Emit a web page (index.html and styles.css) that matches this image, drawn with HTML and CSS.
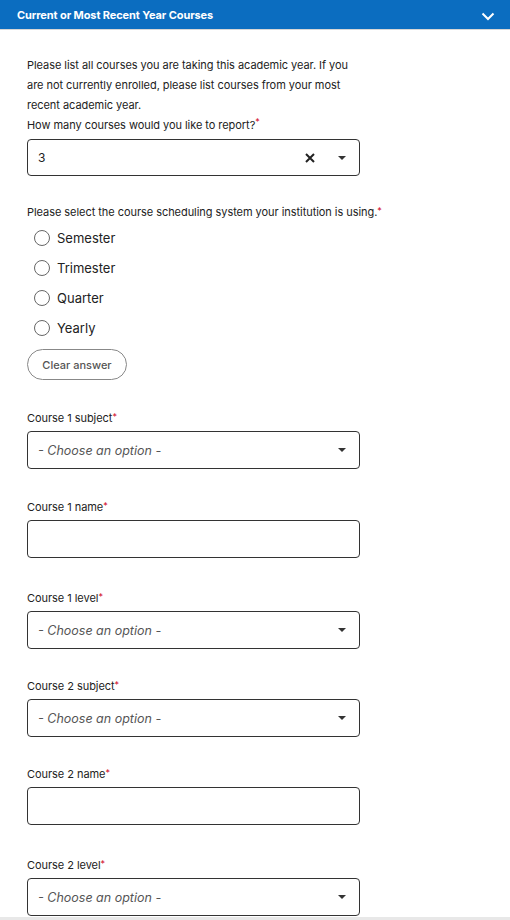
FILE: index.html
```html
<!DOCTYPE html>
<html>
<head>
<meta charset="utf-8">
<link rel="stylesheet" href="styles.css">
</head>
<body>
<div class="panel">
  <div class="header">
    <span class="title">Current or Most Recent Year Courses</span>
    <svg class="chev" width="14" height="10" viewBox="0 0 14 10"><path d="M1.5 2.5 L7 8 L12.5 2.5" fill="none" stroke="#fff" stroke-width="2"/></svg>
  </div>
  <div class="content">
    <p class="intro">Please list all courses you are taking this academic year. If you<br>are not currently enrolled, please list courses from your most<br>recent academic year.<br>How many courses would you like to report?<span class="req">*</span></p>
    <div class="box box-first">
      <span class="value">3</span>
      <svg class="clear" width="10" height="10" viewBox="0 0 10 10"><path d="M1 1 L9 9 M9 1 L1 9" stroke="#222" stroke-width="2"/></svg>
      <svg class="caret" width="8" height="4" viewBox="0 0 8 4"><path d="M0 0 H8 L4 4 Z" fill="#333"/></svg>
    </div>

    <div class="qlabel">Please select the course scheduling system your institution is using.<span class="req">*</span></div>
    <div class="radios">
      <div class="radio"><span class="circle"></span><span>Semester</span></div>
      <div class="radio"><span class="circle"></span><span>Trimester</span></div>
      <div class="radio"><span class="circle"></span><span>Quarter</span></div>
      <div class="radio"><span class="circle"></span><span>Yearly</span></div>
    </div>
    <button class="clearbtn">Clear answer</button>

    <div class="field field-first">
      <div class="label">Course 1 subject<span class="req">*</span></div>
      <div class="box"><span class="ph">- Choose an option -</span><svg class="caret" width="8" height="4" viewBox="0 0 8 4"><path d="M0 0 H8 L4 4 Z" fill="#333"/></svg></div>
    </div>
    <div class="field after-select">
      <div class="label">Course 1 name<span class="req">*</span></div>
      <div class="box"></div>
    </div>
    <div class="field after-input">
      <div class="label">Course 1 level<span class="req">*</span></div>
      <div class="box"><span class="ph">- Choose an option -</span><svg class="caret" width="8" height="4" viewBox="0 0 8 4"><path d="M0 0 H8 L4 4 Z" fill="#333"/></svg></div>
    </div>
    <div class="field">
      <div class="label">Course 2 subject<span class="req">*</span></div>
      <div class="box"><span class="ph">- Choose an option -</span><svg class="caret" width="8" height="4" viewBox="0 0 8 4"><path d="M0 0 H8 L4 4 Z" fill="#333"/></svg></div>
    </div>
    <div class="field">
      <div class="label">Course 2 name<span class="req">*</span></div>
      <div class="box"></div>
    </div>
    <div class="field after-input">
      <div class="label">Course 2 level<span class="req">*</span></div>
      <div class="box"><span class="ph">- Choose an option -</span><svg class="caret" width="8" height="4" viewBox="0 0 8 4"><path d="M0 0 H8 L4 4 Z" fill="#333"/></svg></div>
    </div>
  </div>
  <div class="bottomline"></div>
</div>
</body>
</html>
```
FILE: styles.css
```css
* { box-sizing: border-box; }
html, body { margin: 0; padding: 0; background: #fff; }
body { font-family: Inter, "Open Sans", sans-serif; color: #222; overflow: hidden; height: 920px; }

.header {
  height: 30px;
  background: #0b6dc0;
  border-bottom: 1px solid #d6d6d6;
  display: flex;
  align-items: center;
  justify-content: space-between;
  padding: 0 15px 0 17px;
}
.title { color: #fff; font-weight: 700; font-size: 11px; letter-spacing: -0.1px; }
.chev { display: block; margin-top: 2px; }

.content { padding: 25px 0 0 27px; height: 887px; }
.intro { margin: 0; font-size: 11px; line-height: 20px; letter-spacing: -0.05px; }
.req { color: #d0021b; font-size: 9px; vertical-align: top; line-height: 14px; }

.box {
  width: 333px;
  height: 38px;
  border: 1px solid #333;
  border-radius: 4px;
  display: flex;
  align-items: center;
  padding: 0 13px 0 10px;
}
.box-first { margin-top: 4px; height: 37px; }
.value { font-size: 12px; flex: 1; }
.clear { margin-right: 23px; }
.caret { margin-left: auto; display: block; }
.ph { font-size: 12.5px; font-style: italic; color: #555; flex: 1; }

.qlabel { font-size: 11px; line-height: 16px; margin-top: 28px; letter-spacing: -0.05px; }
.radios { display: flex; flex-direction: column; padding-left: 7px; margin-top: 3px; }
.radio { height: 30px; display: flex; align-items: center; gap: 7px; font-size: 13px; color: #222; }
.circle { width: 16px; height: 16px; border: 1.2px solid #666; border-radius: 50%; display: block; }

.clearbtn {
  margin-top: 6px;
  display: block;
  height: 31px;
  width: 100px;
  border: 1px solid #888;
  background: #fff;
  border-radius: 16px;
  font-family: inherit;
  font-size: 11px;
  font-weight: 500;
  color: #555;
  padding: 0;
}

.field { margin-top: 29px; }
.field.field-first { margin-top: 30px; }
.field.after-select { margin-top: 30px; }
.field.after-input { margin-top: 32px; }
.label { font-size: 11px; line-height: 16px; margin-bottom: 5px; letter-spacing: -0.05px; }

.bottomline { height: 3px; background: #e8e8e8; }
```
